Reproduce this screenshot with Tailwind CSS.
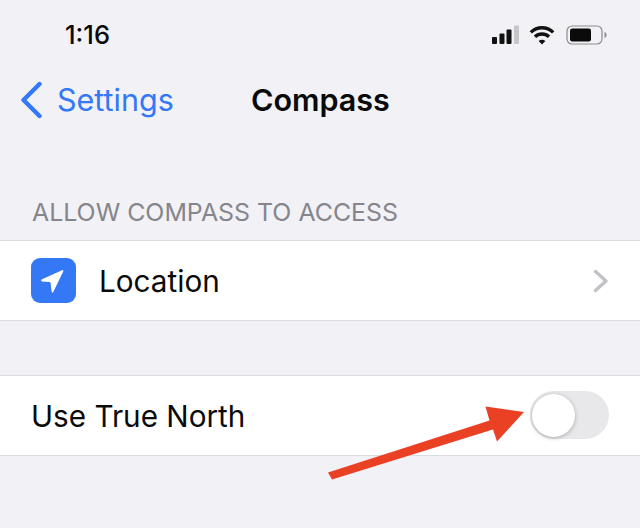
<!DOCTYPE html>
<html lang="en">
<head>
    <meta charset="UTF-8">
    <meta name="viewport" content="width=device-width, initial-scale=1.0">
    <script src="https://cdn.jsdelivr.net/npm/@tailwindcss/browser@4"></script>
    <title>Compass</title>
</head>
<body class="bg-[#f1f1f6] font-['Inter',sans-serif] text-[#0a0a0a]">
<div class="relative w-[640px] h-[528px] overflow-hidden">
    <!-- Status bar -->
    <div class="flex justify-between items-center h-[70px] pl-[65px] pr-[32px]">
        <span class="text-[25.5px] font-medium leading-none">1:16</span>
        <div class="flex items-center gap-[10px]">
            <svg width="28" height="20" viewBox="0 0 28 20">
                <rect x="1" y="12" width="5" height="7" rx="1" fill="#111"/>
                <rect x="8.5" y="8.5" width="5" height="10.5" rx="1" fill="#111"/>
                <rect x="15.5" y="4.5" width="5" height="14.5" rx="1" fill="#111"/>
                <rect x="23" y="0.5" width="5" height="18.5" rx="1" fill="#c6c6c8"/>
            </svg>
            <svg width="26" height="20" viewBox="0 0 26 20" fill="none" stroke="#111" stroke-width="3.4">
                <path d="M1.8 7.4 C8 1.2 18 1.2 24.2 7.4"/>
                <path d="M6 11.8 C10 8 16 8 20 11.8"/>
                <path d="M13 19.6 L9.6 16 C11.6 14.4 14.4 14.4 16.4 16 Z" fill="#111" stroke="none"/>
            </svg>
            <svg width="42" height="20" viewBox="0 0 42 20" class="ml-[1px]">
                <rect x="1" y="1" width="35" height="18" rx="5" fill="none" stroke="#8e8e90" stroke-width="1.2"/>
                <rect x="4" y="3.5" width="21" height="13" rx="2.2" fill="#0b0b0b"/>
                <path d="M38.5 7 C40 7.6 40.6 8.8 40.6 10 C40.6 11.2 40 12.4 38.5 13 Z" fill="#8e8e90"/>
            </svg>
        </div>
    </div>

    <!-- Nav bar -->
    <div class="relative flex items-center h-[60px] pl-[20px]">
        <svg width="23" height="38" viewBox="0 0 23 38" fill="none" stroke="#3478f6" stroke-width="4.4" stroke-linecap="round" stroke-linejoin="round">
            <path d="M19.5 3 L3.5 19 L19.5 35"/>
        </svg>
        <span class="ml-[14px] text-[30.5px] leading-none text-[#3478f6]">Settings</span>
        <span class="absolute left-[251px] text-[30.5px] leading-none font-[560]">Compass</span>
    </div>

    <!-- Section header -->
    <div class="mt-[67px] pl-[32px] text-[24.9px] leading-none text-[#85858b] h-[43px] translate-y-[3px]">ALLOW COMPASS TO ACCESS</div>

    <!-- Location row -->
    <div class="flex items-center h-[81px] bg-white border-y border-[#dcdce0] pl-[31px] pr-[31px]">
        <div class="flex items-center justify-center w-[45px] h-[45px] rounded-[9px] bg-[#3478f6]">
            <svg width="45" height="45" viewBox="0 0 45 45">
                <path d="M10.5 21.5 L31 12.2 Q32.8 11.6 32.2 13.4 L22.3 34 Q21 35.6 20.6 33.6 L19.6 25 Q19.4 24 18.4 24 L10.8 23.4 Q9.6 22.4 10.5 21.5 Z" fill="#fff"/>
            </svg>
        </div>
        <span class="ml-[23px] text-[29.7px] leading-none translate-y-[1px]">Location</span>
        <svg class="ml-auto" width="16" height="24" viewBox="0 0 16 24" fill="none" stroke="#c2c2c6" stroke-width="3.4" stroke-linecap="round" stroke-linejoin="round">
            <path d="M2.5 2.5 L13 12 L2.5 21.5"/>
        </svg>
    </div>

    <!-- True North row -->
    <div class="flex items-center justify-between h-[81px] mt-[54px] bg-white border-y border-[#dcdce0] pl-[31px] pr-[31px]">
        <span class="text-[29.7px] leading-none translate-y-[1px]">Use True North</span>
        <div class="relative w-[79px] h-[48px] rounded-full bg-[#e8e8ea] -translate-y-[1px]">
            <div class="absolute left-[2px] top-[3px] w-[43px] h-[43px] rounded-full bg-white shadow-[0_1px_4px_rgba(0,0,0,0.28)]"></div>
        </div>
    </div>

    <!-- Red annotation arrow -->
    <svg class="absolute left-0 top-0" width="640" height="528" viewBox="0 0 640 528">
        <path d="M328 472.5 L489.5 420.5 L485.5 406.5 L524 412 L497 441.5 L493 429.5 L332 479.5 Z" fill="#ea4125"/>
    </svg>
</div>
</body>
</html>
